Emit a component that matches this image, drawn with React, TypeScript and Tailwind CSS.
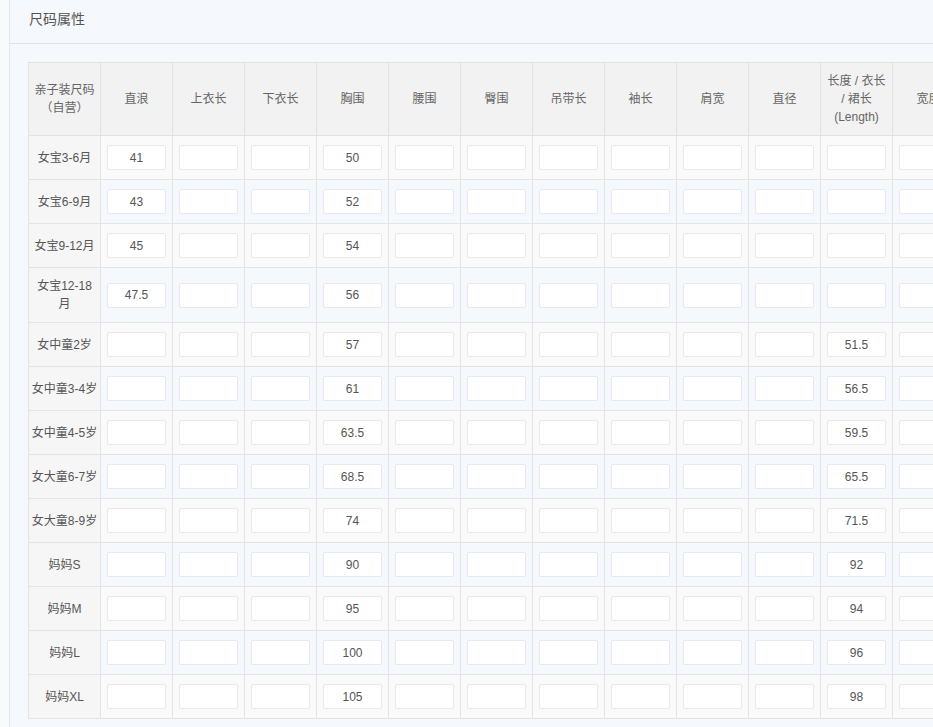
import React from "react";

const columns = ["直浪", "上衣长", "下衣长", "胸围", "腰围", "臀围", "吊带长", "袖长", "肩宽", "直径", "长度", "宽度"];

// [size label, 直浪, 胸围, 长度]
const rows: { label: React.ReactNode; zl?: string; xw: string; cd?: string }[] = [
    { label: "女宝3-6月", zl: "41", xw: "50" },
    { label: "女宝6-9月", zl: "43", xw: "52" },
    { label: "女宝9-12月", zl: "45", xw: "54" },
    { label: <>女宝12-18<br />月</>, zl: "47.5", xw: "56" },
    { label: "女中童2岁", xw: "57", cd: "51.5" },
    { label: "女中童3-4岁", xw: "61", cd: "56.5" },
    { label: "女中童4-5岁", xw: "63.5", cd: "59.5" },
    { label: "女大童6-7岁", xw: "68.5", cd: "65.5" },
    { label: "女大童8-9岁", xw: "74", cd: "71.5" },
    { label: "妈妈S", xw: "90", cd: "92" },
    { label: "妈妈M", xw: "95", cd: "94" },
    { label: "妈妈L", xw: "100", cd: "96" },
    { label: "妈妈XL", xw: "105", cd: "98" },
];

function Box({ value }: { value?: string }) {
    return (
        <div className="w-full h-[25px] bg-white border border-[#e7e9ec] rounded-[2px] flex items-center justify-center text-[12px] text-[#555]">
            {value}
        </div>
    );
}

export default function App() {
    return (
        <div
            className="w-[933px] h-[727px] overflow-hidden bg-[#f9fafc] pl-[9px]"
            style={{ fontFamily: '"Liberation Sans", "Noto Sans CJK SC", sans-serif' }}
        >
            <div className="h-full bg-[#f5f8fc] border-l border-[#e3e7ed]">

                <div className="h-[44px] border-b border-[#dfe4ea] flex items-center pl-[19px] pb-[4px] text-[14px] text-[#555]">
                    尺码属性
                </div>

                <div className="pl-[18px] pt-[18px]">
                    <table className="border-collapse table-fixed w-[936px] text-[12px] leading-[18px] text-[#555]">
                        <colgroup>
                            <col className="w-[72px]" />
                            {columns.map((c) => (
                                <col key={c} className="w-[72px]" />
                            ))}
                        </colgroup>
                        <thead>
                            <tr className="bg-[#f2f2f2]">
                                <th className="border border-[#e2e2e2] font-normal text-[#666] px-[2px] py-[9px] text-center">
                                    亲子装尺码<br />（自营）
                                </th>
                                {columns.map((c) => (
                                    <th key={c} className="border border-[#e2e2e2] font-normal text-[#666] px-[2px] py-[9px] text-center whitespace-nowrap">
                                        {c === "长度" ? (
                                            <>长度 / 衣长<br />/ 裙长<br />(Length)</>
                                        ) : c}
                                    </th>
                                ))}
                            </tr>
                        </thead>
                        <tbody>
                            {rows.map((r, i) => (
                                <tr key={i} className={i % 2 === 0 ? "bg-[#fafafa]" : "bg-[#f5f8fc]"}>
                                    <td className="h-[44px] border border-[#e4e4e4] bg-[#f6f6f6] px-[2px] py-[9px] text-center whitespace-nowrap">
                                        {r.label}
                                    </td>
                                    {columns.map((c, j) => {
                                        let v: string | undefined;
                                        if (j === 0) v = r.zl;
                                        if (j === 3) v = r.xw;
                                        if (j === 10) v = r.cd;
                                        return (
                                            <td key={c} className="border border-[#e4e4e4] px-[6px] py-[9px] align-middle">
                                                <Box value={v} />
                                            </td>
                                        );
                                    })}
                                </tr>
                            ))}
                        </tbody>
                    </table>
                </div>

            </div>
        </div>
    );
}
